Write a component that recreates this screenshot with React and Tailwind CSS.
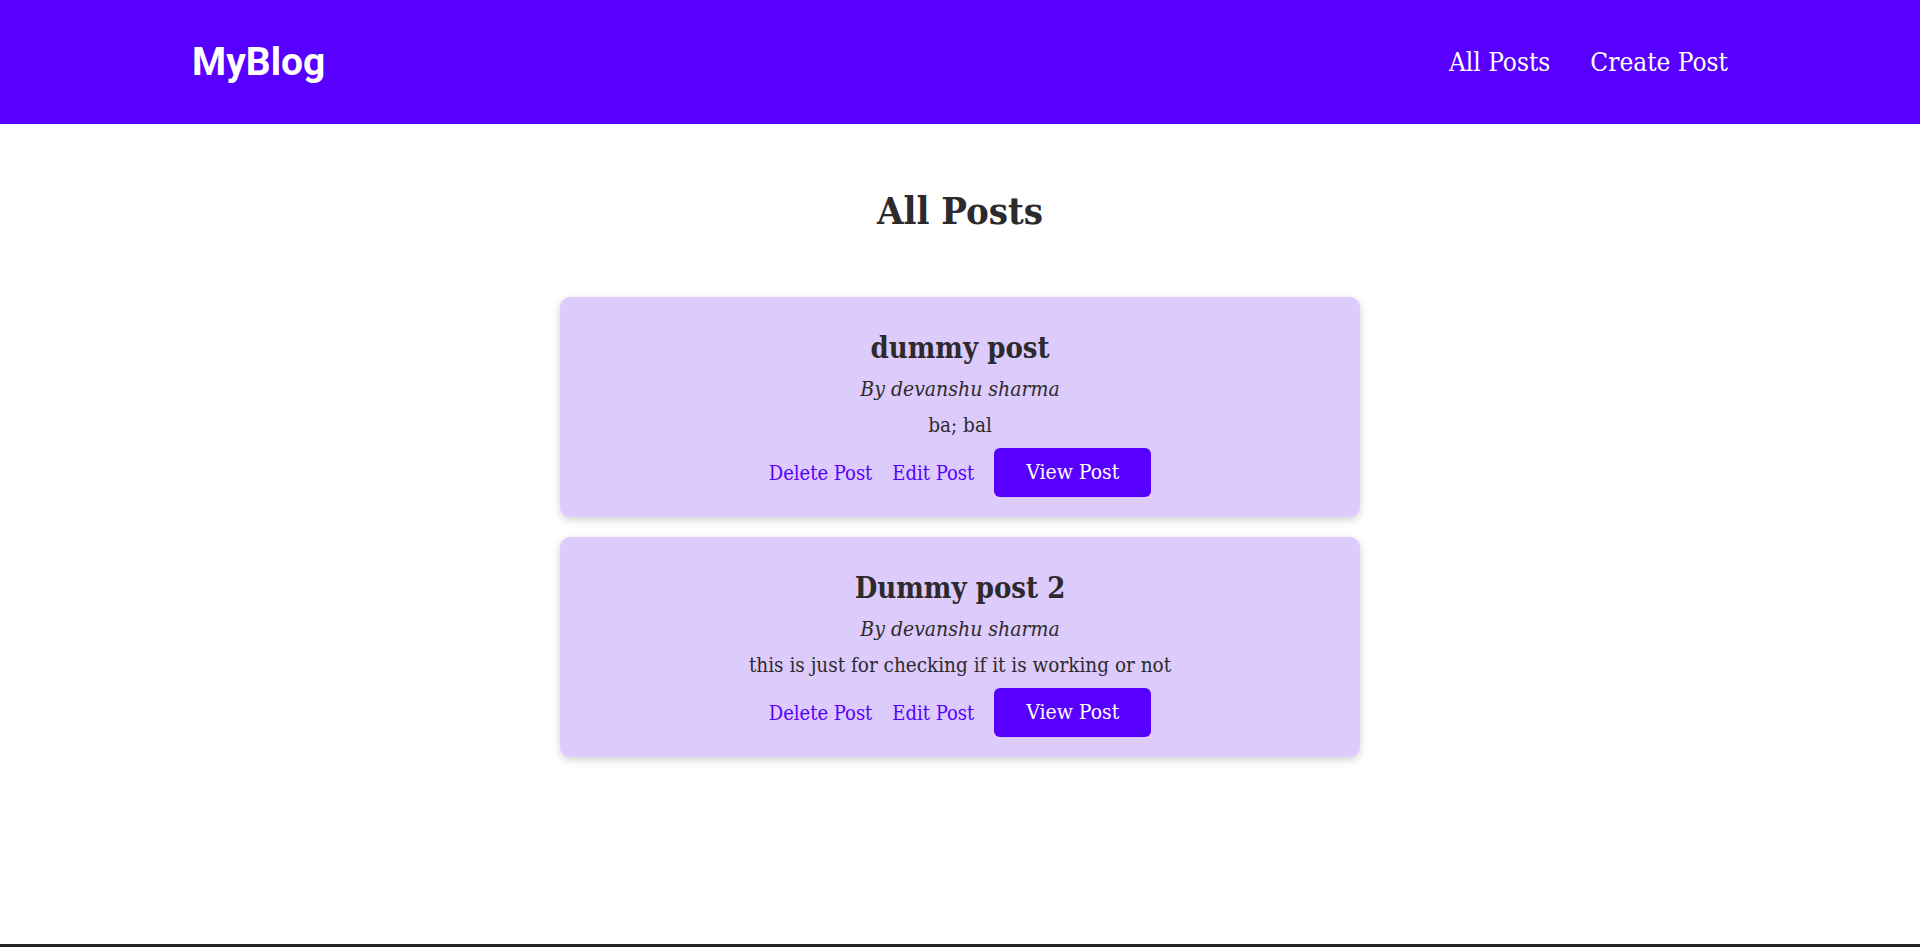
const posts = [
  { id: 1, title: "dummy post", author: "devanshu sharma", content: "ba; bal" },
  {
    id: 2,
    title: "Dummy post 2",
    author: "devanshu sharma",
    content: "this is just for checking if it is working or not",
  },
];

const slab = "font-['DejaVu_Serif',serif] [font-stretch:condensed]";

const PostCard = ({ post }) => {
  return (
    <div className="w-[800px] bg-[#dccbfb] rounded-[10px] shadow-[0_3px_8px_rgba(0,0,0,0.18)] pt-[34px] pb-[20px] flex flex-col items-center text-[#2d2a2e]">
      <h2 className="text-[29px] leading-[34px] font-bold">{post.title}</h2>
      <p className="mt-[12px] text-[21px] leading-[24px] italic">By {post.author}</p>
      <p className="mt-[12px] text-[20.5px] leading-[24px]">{post.content}</p>
      <div className="mt-[11px] flex items-center gap-[20px] text-[20px]">
        <a className="text-[#5800ff] cursor-pointer">Delete Post</a>
        <a className="text-[#5800ff] cursor-pointer">Edit Post</a>
        <button className="w-[157px] h-[49px] bg-[#5800ff] text-white text-[21px] rounded-[6px]">
          View Post
        </button>
      </div>
    </div>
  );
};

const App = () => {
  return (
    <div className={`min-h-screen flex flex-col bg-white ${slab}`}>
      <header className="h-[124px] bg-[#5800ff] px-[192px] flex items-center justify-between">
        <h1 className="font-['Roboto',sans-serif] [font-stretch:normal] font-bold text-[39px] text-white">MyBlog</h1>
        <nav className="flex items-center gap-[40px] text-[26px] text-white">
          <a className="cursor-pointer">All Posts</a>
          <a className="cursor-pointer">Create Post</a>
        </nav>
      </header>

      <main className="flex-1 flex flex-col items-center">
        <h1 className="mt-[61px] text-[38px] leading-[52px] font-bold text-[#2d2a2e]">All Posts</h1>
        <div className="mt-[60px] flex flex-col gap-[20px]">
          {posts.map((post) => (
            <PostCard key={post.id} post={post} />
          ))}
        </div>
      </main>

      <footer className="h-[3px] bg-[#222]" />
    </div>
  );
};

export default App;
